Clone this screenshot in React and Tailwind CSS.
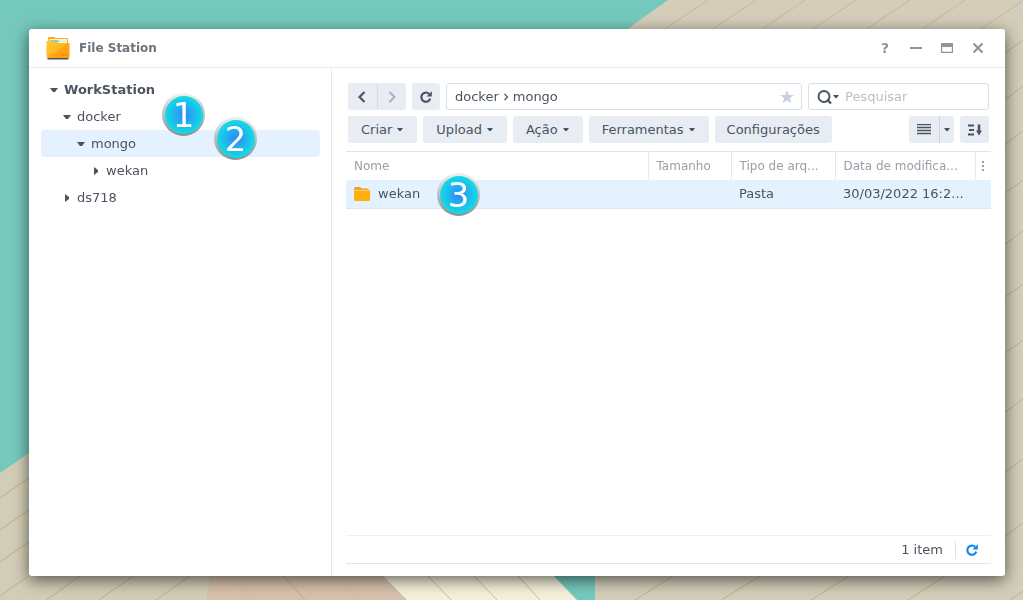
const tree = [
  { name: 'WorkStation', open: true, pad: 'pl-[9px]', bold: true },
  { name: 'docker', open: true, pad: 'pl-[22px]' },
  { name: 'mongo', open: true, pad: 'pl-9', selected: true },
  { name: 'wekan', open: false, pad: 'pl-[51px]' },
  { name: 'ds718', open: false, pad: 'pl-[22px]' },
];

const menus = ['Criar', 'Upload', 'Ação', 'Ferramentas'];

const badges = [
  { label: '1', place: 'left-[133px] top-16' },
  { label: '2', place: 'left-[185px] top-[88px]' },
  { label: '3', place: 'left-[408px] top-36' },
];

// where the board seams meet the right and top edges of the window
const rightBoards = [53, 99, 144, 193, 244, 297, 353, 412, 472, 536];
const topBoards = [665, 713, 762, 813, 867, 922, 981];

function Wallpaper() {
  return (
    <svg
      className="absolute inset-0 h-full w-full"
      viewBox="0 0 1023 600"
      preserveAspectRatio="none"
      aria-hidden="true"
    >
      <rect width="1023" height="600" fill="#75c9bc" />
      <path d="M668 0H1023V600H595V52Z" fill="#d3cdb9" />
      <path d="M0 473L200 335V570H211L207 600H0Z" fill="#d2cdb6" />
      <path d="M211 570H377L407 600H207Z" fill="#d8c1ac" />
      <path d="M377 570H548L577 600H407Z" fill="#f4f0da" />
      <g stroke="#b5aa83" strokeWidth="1" fill="none" opacity="0.8">
        {rightBoards.map((y) => (
          <path key={y} d={`M1000 ${y + 4}L1023 ${y - 13}`} />
        ))}
        {topBoards.map((x) => (
          <path key={x} d={`M${x} 29L${x + 43} 0`} opacity="0.7" />
        ))}
        <path d="M0 498L30 477M0 530L30 509M0 562L30 541M0 596L30 575M46 600L80 576M99 600L133 576M156 600L190 576" />
        <path d="M635 600L673 576M721 600L760 576M811 600L849 576M908 600L945 576M1010 600L1023 591" />
        <path d="M283 576L305 600" />
      </g>
      <g stroke="#d9b89a" strokeWidth="1">
        <path d="M230 576L252 600M338 576L358 600M428 576L451 600M474 576L497 600M518 576L540 600" />
      </g>
    </svg>
  );
}

function Caret({ small }) {
  return (
    <svg className={small ? 'h-[3px] w-1.5 shrink-0' : 'h-1 w-2 shrink-0'} viewBox="0 0 8 4" preserveAspectRatio="none" aria-hidden="true">
      <path d="M0 0H8L5 4H3Z" fill="currentColor" />
    </svg>
  );
}

function RightCaret() {
  return (
    <svg className="mx-0.5 h-2 w-1 shrink-0" viewBox="0 0 4 8" aria-hidden="true">
      <path d="M0 0L4 3V5L0 8Z" fill="currentColor" />
    </svg>
  );
}

function Reload({ className }) {
  return (
    <svg className={className} viewBox="0 0 14 14" aria-hidden="true">
      <path d="M10.2 3.9A4.6 4.6 0 1 0 11.3 8.7" fill="none" stroke="currentColor" strokeWidth="2.1" />
      <path d="M12.8 1.2V6.400H7.600Z" fill="currentColor" />
    </svg>
  );
}

function AppIcon() {
  return (
    <svg className="h-6 w-6" viewBox="0 0 24 24" aria-hidden="true">
      <defs>
        <linearGradient id="folderFront" x1="0" y1="0" x2="1" y2="1">
          <stop offset="0" stopColor="#ffcb2e" />
          <stop offset="0.5" stopColor="#ffb724" />
          <stop offset="0.55" stopColor="#ffa51a" />
          <stop offset="1" stopColor="#ff9a12" />
        </linearGradient>
      </defs>
      <path d="M2 2Q2 1 3 1H8L10 2H21Q22 2 22 3.500V21H2Z" fill="#f5ac1c" />
      <path d="M3 3H21V8H3Z" fill="#fff6d8" />
      <path d="M4 4H12L14 5H20V8H4Z" fill="#8ccfc6" />
      <path d="M12 5.500H21V8H12Z" fill="#fffdf2" />
      <path d="M0.500 5H8L10.500 7H23.500V20.500Q23.500 22 22 22H2Q0.500 22 0.500 20.500Z" fill="url(#folderFront)" />
      <path d="M1.500 22H22.500V23.500H1.500Z" fill="#565151" />
      <path d="M16 19H17.500M19 19H20.500" stroke="#c97a12" />
    </svg>
  );
}

function TitleBar() {
  return (
    <header className="flex h-[39px] shrink-0 items-center border-b border-[#e3eaf1] pr-5 pl-[17px]">
      <AppIcon />
      <h1 className="ml-[9px] flex-1 text-[12px] font-bold text-[#6b737c]">File Station</h1>
      <div className="flex gap-[17px] text-[#8d959d]">
        <button type="button" aria-label="Ajuda" className="flex h-4 w-3.5 items-center justify-center text-[14px] font-bold">?</button>
        <button type="button" aria-label="Minimizar" className="flex h-4 w-3.5 items-center justify-center">
          <svg className="h-3 w-3" viewBox="0 0 12 12"><path d="M0 6H12" stroke="currentColor" strokeWidth="2" /></svg>
        </button>
        <button type="button" aria-label="Maximizar" className="flex h-4 w-3.5 items-center justify-center">
          <svg className="h-3 w-3" viewBox="0 0 12 12"><path d="M0 1H12V11H0Z M1.200 5V9.800H10.800V5Z" fill="currentColor" fillRule="evenodd" /></svg>
        </button>
        <button type="button" aria-label="Fechar" className="flex h-4 w-3.5 items-center justify-center">
          <svg className="h-3 w-3" viewBox="0 0 12 12"><path d="M1.500 1.500L10.500 10.500M10.500 1.500L1.500 10.500" stroke="currentColor" strokeWidth="2.200" /></svg>
        </button>
      </div>
    </header>
  );
}

function Sidebar() {
  return (
    <nav className="w-[303px] shrink-0 border-r border-[#e3eaf1] pt-2 pr-[11px] pl-3">
      {tree.map((node) => (
        <button
          key={node.name}
          type="button"
          className={`flex h-[27px] w-full items-center gap-[6px] rounded text-left ${node.pad} ${node.bold ? 'font-bold' : ''} ${node.selected ? 'bg-[#e4f1fe]' : ''}`}
        >
          {node.open ? <Caret /> : <RightCaret />}
          {node.name}
        </button>
      ))}
    </nav>
  );
}

function Toolbar() {
  return (
    <div className="flex flex-col gap-[6px] px-0.5">
      <div className="flex h-[27px] gap-[6px]">
        <div className="flex w-[58px] rounded-[3px] bg-[#e8edf4]">
          <button type="button" aria-label="Voltar" className="flex flex-1 items-center justify-center border-r border-[#d3dce5]">
            <svg className="h-3 w-2" viewBox="0 0 8 12"><path d="M6.500 1L1.500 6L6.500 11" fill="none" stroke="currentColor" strokeWidth="2.200" /></svg>
          </button>
          <button type="button" aria-label="Avançar" className="flex flex-1 items-center justify-center text-[#aab2bb]">
            <svg className="h-3 w-2" viewBox="0 0 8 12"><path d="M1.500 1L6.500 6L1.500 11" fill="none" stroke="currentColor" strokeWidth="2" /></svg>
          </button>
        </div>
        <button type="button" aria-label="Atualizar" className="flex w-7 items-center justify-center rounded-[3px] bg-[#e8edf4]">
          <Reload className="h-3.5 w-3.5" />
        </button>
        <div className="flex min-w-0 flex-1 items-center rounded-[3px] border border-[#d6e0ea] pr-[7px] pl-2">
          <a href="#docker">docker</a>
          <svg className="mx-1 h-2 w-1.5" viewBox="0 0 6 8" aria-hidden="true"><path d="M1.500 1L4.500 4L1.500 7" fill="none" stroke="currentColor" strokeWidth="1.200" /></svg>
          <a href="#mongo" className="flex-1">mongo</a>
          <button type="button" aria-label="Favorito" className="text-[#c6d2df]">
            <svg className="h-3.5 w-3.5" viewBox="0 0 14 14"><path d="M7 0L8.800 5H14L9.800 8.200L11.400 13.500L7 10.300L2.600 13.500L4.200 8.200L0 5H5.200Z" fill="currentColor" /></svg>
          </button>
        </div>
        <label className="flex w-[181px] items-center rounded-[3px] border border-[#d6e0ea] pl-2">
          <svg className="h-4 w-4" viewBox="0 0 16 16" aria-hidden="true">
            <circle cx="7" cy="7.500" r="5.500" fill="none" stroke="currentColor" strokeWidth="2" />
            <path d="M10 10.500L14 14.500" stroke="currentColor" strokeWidth="2.400" />
          </svg>
          <Caret small />
          <input type="text" aria-label="Pesquisar" placeholder="Pesquisar" className="ml-[6px] w-0 flex-1 outline-none placeholder:text-[#b9c0c6]" />
        </label>
      </div>
      <div className="flex h-[27px] gap-[6px]">
        {menus.map((name) => (
          <button key={name} type="button" className="flex items-center gap-[5px] rounded-[3px] bg-[#e8edf4] pr-3.5 pl-[13px]">
            {name}
            <Caret small />
          </button>
        ))}
        <button type="button" className="rounded-[3px] bg-[#e8edf4] px-3">Configurações</button>
        <div className="ml-auto flex w-[45px] rounded-[3px] bg-[#e8edf4]">
          <button type="button" aria-label="Lista" className="flex flex-1 items-center justify-center border-r border-[#cbd4dd]">
            <svg className="h-3 w-3.5" viewBox="0 0 14 12"><path d="M0 0.500H14M0 3.500H14M0 6.500H14M0 9.500H14" stroke="currentColor" strokeWidth="1.700" /></svg>
          </button>
          <button type="button" aria-label="Modo de exibição" className="flex w-3.5 items-center justify-center"><Caret small /></button>
        </div>
        <button type="button" aria-label="Ordenar" className="flex w-[29px] items-center justify-center rounded-[3px] bg-[#e8edf4]">
          <svg className="h-3 w-4" viewBox="0 0 16 12">
            <path d="M1 1.500H7M2 6H7M1 10.500H7" stroke="currentColor" strokeWidth="1.800" />
            <path d="M12 0.500V7" stroke="currentColor" strokeWidth="2.500" />
            <path d="M9 6.500H15L12 11.500Z" fill="currentColor" />
          </svg>
        </button>
      </div>
    </div>
  );
}

function FileTable() {
  return (
    <table className="mt-2 w-full table-fixed border-t border-[#dbe5ee] text-left">
      <thead>
        <tr className="h-7 text-[12px] text-[#98a0a8]">
          <th className="border-r border-[#e3eaf1] px-2 font-normal">Nome</th>
          <th className="w-[83px] border-r border-[#e3eaf1] px-2 font-normal">Tamanho</th>
          <th className="w-[104px] border-r border-[#e3eaf1] px-2 font-normal whitespace-nowrap">Tipo de arq...</th>
          <th className="w-[140px] border-r border-[#e3eaf1] px-2 font-normal whitespace-nowrap">Data de modifica...</th>
          <th className="w-4">
            <button type="button" aria-label="Colunas" className="flex w-full justify-center">
              <svg className="h-3 w-0.5" viewBox="0 0 2 12"><path d="M0 1H2V3H0ZM0 5H2V7H0ZM0 9H2V11H0Z" fill="currentColor" /></svg>
            </button>
          </th>
        </tr>
      </thead>
      <tbody>
        <tr className="h-[29px] border-b border-[#dbe9f6] bg-[#e4f1fe]">
          <td className="px-2">
            <span className="flex items-center gap-2">
              <svg className="h-3.5 w-4" viewBox="0 0 16 14" aria-hidden="true">
                <path d="M0 1.500Q0 0 1.500 0H6L8 1.500H14.500V3H0Z" fill="#f9a11b" />
                <path d="M0 3.500H16V12.500Q16 14 14.500 14H1.500Q0 14 0 12.500Z" fill="#ffb10a" />
              </svg>
              wekan
            </span>
          </td>
          <td />
          <td className="px-2">Pasta</td>
          <td className="px-2 whitespace-nowrap">30/03/2022 16:2...</td>
          <td />
        </tr>
      </tbody>
    </table>
  );
}

function Badge({ label, place }) {
  return (
    <span className={`absolute flex h-[43px] w-[43px] items-center justify-center rounded-full bg-linear-to-b from-[#f1f1f1] to-[#8d8d8d] ${place}`}>
      <span className="flex h-[38px] w-[38px] items-center justify-center rounded-full bg-radial from-[#2f86f5] to-[#15dbe3] to-70% text-[34px] leading-none text-white">
        {label}
      </span>
    </span>
  );
}

function App() {
  return (
    <div className="relative flex min-h-screen overflow-hidden pt-[29px] pr-[18px] pb-6 pl-[29px] font-['DejaVu_Sans',sans-serif] text-[13px] text-[#4b545e]">
      <Wallpaper />
      <div className="relative flex flex-1 flex-col rounded-[3px] bg-white shadow-[0_4px_16px_rgba(0,0,0,0.6)]">
        <TitleBar />
        <div className="flex flex-1">
          <Sidebar />
          <main className="flex min-w-0 flex-1 flex-col px-3.5 pt-[15px] pb-3">
            <Toolbar />
            <FileTable />
            <footer className="mt-auto flex h-[29px] items-center justify-end border-t border-b border-t-[#eef1f4] border-b-[#dbe5ee]">
              <span className="pr-3">1 item</span>
              <button type="button" aria-label="Recarregar" className="border-l border-[#dbe3ec] py-0.5 pr-3 pl-[9px] text-[#0f85f0]">
                <Reload className="h-3.5 w-3.5" />
              </button>
            </footer>
          </main>
        </div>
        {badges.map((b) => (
          <Badge key={b.label} {...b} />
        ))}
      </div>
    </div>
  );
}

export default App;
